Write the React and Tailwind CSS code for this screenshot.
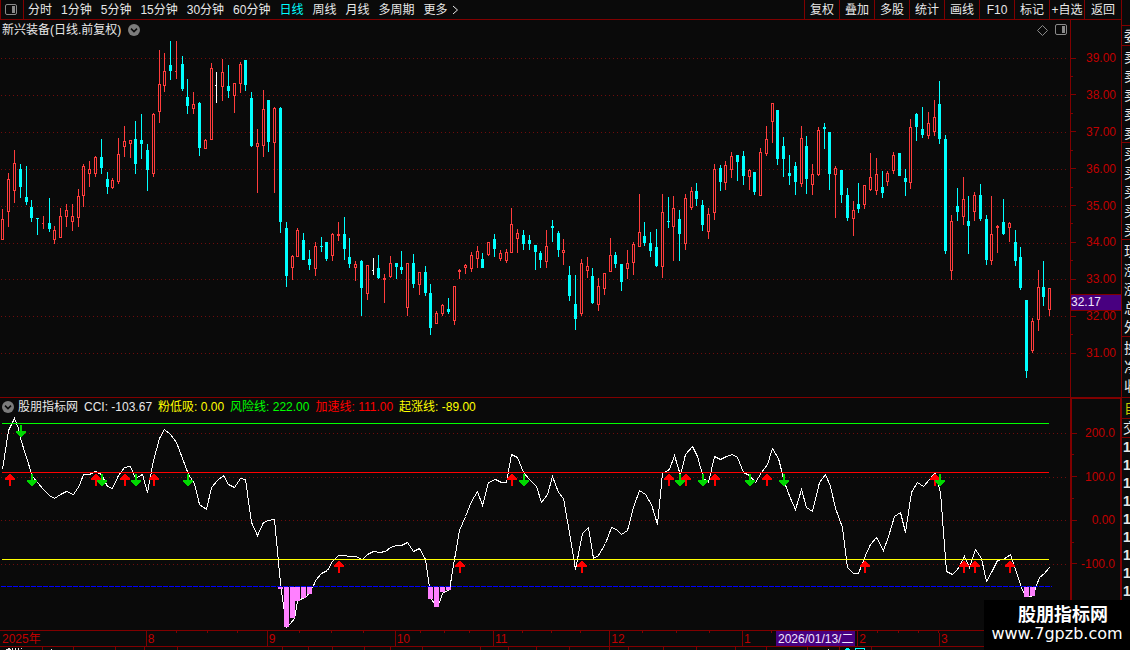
import React from "react";

const BG = "#0a0a0a";
const UP = "#ff3c3c";
const DOWN = "#00ffff";

// x, high, body top, body bottom, low, kind (R rising, C falling, W flat)
const candles = `
2 209 219 240 240 R|8 173 179 212 227 R|14 150 163 191 203 R|20 164 169 187 198 C|26 166 197 202 205 C
31 200 207 218 222 C|37 218 218 219 235 C|43 216 223 224 229 R|49 198 223 229 232 C|54 226 230 240 244 R
60 208 216 238 238 R|66 204 210 217 227 R|72 204 216 222 231 R|78 189 196 218 227 R|83 164 166 196 207 R
89 161 169 174 187 R|95 156 157 174 177 R|101 139 157 168 174 C|107 172 179 187 194 C|112 178 180 188 189 R
118 138 154 182 184 R|124 126 141 147 157 R|130 140 140 144 158 R|135 121 139 164 174 C|141 114 140 144 159 C
147 144 150 170 191 C|153 113 114 174 177 R|159 50 84 112 123 R|164 53 71 86 92 R|170 41 65 71 80 C
176 41 71 72 79 R|182 56 64 89 91 C|187 79 97 106 114 C|193 92 104 109 114 R|199 102 103 148 156 C
205 139 140 149 149 R|211 63 68 140 140 R|216 72 85 86 103 W|222 59 72 87 101 R|228 65 86 91 98 C
234 83 83 96 113 R|240 62 64 84 93 R|245 60 60 85 91 C|251 92 98 146 147 C|257 129 143 147 193 R
263 90 109 146 157 R|268 100 100 142 152 C|274 107 108 143 193 R|280 107 108 222 233 C|286 222 228 276 287 C
292 255 256 268 280 R|297 228 230 257 257 R|303 233 240 260 260 C|309 250 259 265 270 C|315 242 246 269 276 R
321 237 246 247 252 C|326 242 242 259 261 C|332 233 234 256 261 R|338 222 234 236 241 R|344 217 234 249 260 C
349 238 257 264 268 C|355 261 264 268 281 R|361 260 261 288 316 C|367 265 265 294 300 R|373 258 270 271 275 W
378 255 268 278 279 C|384 274 278 280 303 R|390 256 263 277 278 R|396 263 263 267 279 C|401 251 267 270 274 C
407 263 263 308 316 R|413 254 263 284 288 C|419 272 272 285 295 R|425 266 272 293 296 C|430 284 293 328 335 C
436 311 313 324 324 R|442 304 305 314 316 R|448 298 309 312 314 C|454 286 286 321 325 R|459 269 270 272 279 R
465 264 265 268 274 R|471 252 255 269 272 R|477 246 251 259 268 R|482 253 259 268 268 C|488 242 242 255 256 R
494 234 239 249 257 C|500 250 253 259 261 R|506 249 252 261 263 R|511 208 224 253 253 R|517 229 233 239 253 R
523 230 235 244 250 C|529 235 240 244 250 C|535 245 245 252 270 C|540 251 253 260 268 C|546 230 246 262 268 R
552 220 226 228 242 C|558 231 233 250 257 C|563 239 250 253 265 R|569 266 275 296 301 C|575 275 304 319 330 C
581 259 263 314 316 R|587 257 266 271 278 R|592 268 276 303 304 C|598 278 286 305 311 R|604 273 273 289 295 R
610 238 255 272 272 R|615 252 255 264 268 C|621 264 264 282 291 C|627 250 263 269 279 R|633 242 244 263 275 R
639 194 232 247 247 R|644 222 236 243 246 C|650 232 243 251 257 C|656 229 247 266 267 C|662 194 212 267 278 R
668 197 221 222 228 C|673 196 208 227 261 R|679 210 219 234 261 C|685 194 198 244 250 R|691 187 191 208 210 R
696 183 191 199 206 C|702 200 205 225 231 C|708 208 214 232 239 R|714 164 169 213 220 R|720 165 168 182 191 C
725 161 165 183 190 R|731 152 156 170 178 R|737 155 155 162 181 C|743 151 156 176 185 C|749 169 170 177 190 R
754 172 172 192 195 C|760 148 152 196 196 R|766 126 139 154 156 R|772 103 103 122 143 R|777 110 110 159 165 C
783 137 146 159 177 C|789 155 173 176 185 C|795 162 166 182 195 C|801 126 138 184 187 R|806 136 146 179 194 C
812 164 174 185 195 R|818 127 130 175 176 R|824 123 127 129 149 C|829 132 132 174 190 C|835 166 168 175 218 R
841 170 170 195 203 C|847 188 195 218 221 C|853 201 210 219 236 R|858 183 204 209 213 C|864 185 185 205 209 R
870 153 177 190 191 R|876 158 174 191 195 R|882 171 187 193 198 C|887 171 173 182 186 R|893 152 155 171 174 R
899 153 153 176 176 C|905 169 178 182 196 C|910 119 127 183 189 R|916 113 114 127 141 C|922 107 129 135 138 C
928 112 123 136 139 R|934 100 117 132 136 R|939 81 104 139 144 C|945 135 139 251 254 C|951 215 221 271 280 R
957 188 206 212 221 C|963 177 199 217 225 R|968 196 221 226 254 C|974 192 195 212 221 R|980 184 195 219 221 C
986 215 219 260 265 C|991 196 234 261 265 R|997 225 226 228 253 R|1003 199 222 234 235 C|1009 222 223 228 242 R
1015 230 242 261 266 C|1020 247 257 288 290 C|1026 300 300 371 378 C|1032 318 321 351 353 R|1038 270 287 320 331 R
1043 261 287 297 306 C|1049 288 288 310 316 R`
  .trim()
  .split(/[|\n]/)
  .map((row) => {
    const parts = row.trim().split(" ");
    return [...parts.slice(0, 5).map(Number), parts[5]];
  });

const cciPoints =
  "2,469 8,430 14,418 18,428 20,438 26,457 32,476 37,482 43,489 49,495 54,498 60,494 66,491 73,494 79,485 83,474 89,474 95,471 101,474 107,486 112,488 118,475 124,467 130,466 135,478 142,474 147,492 153,460 159,438 164,429 170,434 176,442 182,458 188,474 194,483 199,504 206,509 211,487 217,480 223,475 228,484 234,487 240,478 245,479 251,522 257,535 263,522 268,520 274,519 280,583 286,627 290,623 294,618 297,601 302,598 306,596 312,588 315,580 321,573 327,570 332,561 338,555 344,555 349,556 355,556 362,559 367,554 373,551 379,552 385,551 390,547 396,545 401,545 407,542 413,551 419,548 425,559 429,587 431,599 434,603 439,602 442,593 449,589 454,559 459,530 465,516 471,501 477,491 482,505 488,482 495,479 501,482 506,482 511,454 517,457 523,472 529,479 536,486 541,502 547,494 552,476 558,492 563,498 570,538 575,569 582,533 588,527 593,558 598,555 605,543 611,527 616,529 621,534 627,530 633,507 639,490 645,494 651,504 657,524 662,473 669,469 674,455 680,475 685,454 692,446 697,456 703,478 708,482 714,456 720,459 726,456 732,454 737,457 743,472 749,475 755,482 761,472 767,464 772,448 778,458 784,482 790,498 795,509 801,489 806,507 812,511 819,482 825,474 830,486 835,508 842,527 847,567 853,573 858,573 865,555 870,544 876,537 883,550 888,536 894,516 900,512 905,532 911,492 917,482 923,486 929,479 935,472 940,492 946,571 952,574 957,569 964,556 969,567 975,549 981,558 986,581 992,570 997,560 1003,559 1010,554 1015,569 1021,587 1025,596 1031,596 1035,588 1039,577 1044,573 1049,567";

// x, width, height, hanging from the blue threshold
const pinkBars = [
  [278, 5, 2], [284, 5, 40], [290, 5, 31], [295, 5, 14], [301, 5, 11], [307, 5, 7],
  [428, 5, 12], [434, 5, 20], [440, 5, 5], [446, 5, 3], [1024, 5, 10], [1030, 5, 9],
];

const upArrows = [
  [10, 474], [96, 474], [125, 474], [154, 474], [512, 474], [669, 474], [686, 474], [715, 474],
  [767, 474], [935, 474], [339, 561], [460, 561], [582, 561], [865, 561], [964, 561], [975, 561], [1010, 561],
];
const downArrows = [
  [21, 425], [32, 474], [102, 474], [136, 474], [188, 474], [524, 474], [680, 474], [703, 474],
  [750, 474], [784, 474], [940, 474],
];

const months = [
  ["2025年", 146], ["8", 121], ["9", 128], ["10", 98], ["11", 116], ["12", 133], ["1", 115], ["2", 81], ["3", 183],
];
const monthStarts = [146, 267, 395, 493, 609, 742, 857, 938];
const minorTicks = [176, 207, 237, 299, 331, 363, 420, 444, 469, 522, 551, 580, 642, 676, 709, 771, 877, 898, 918];
const tabEdges = [42, 73, 115, 144, 177, 282, 308, 332, 364, 390, 422, 480, 508, 536, 569, 609, 628, 663, 696, 735, 766, 807, 839, 871];

const periods = ["分时", "1分钟", "5分钟", "15分钟", "30分钟", "60分钟", "日线", "周线", "月线", "多周期"];
const tools = ["复权", "叠加", "多股", "统计", "画线", "F10", "标记", "+自选"];

function PanelIcon() {
  return (
    <svg width="13" height="12" viewBox="0 0 13 12" aria-hidden="true">
      <rect x="0.5" y="0.5" width="11" height="10" rx="1.5" fill="none" stroke="#8a8a8a" />
      <rect x="7" y="2" width="3" height="7" fill="#8a8a8a" />
    </svg>
  );
}

function CollapseIcon() {
  return (
    <svg width="12" height="12" viewBox="0 0 12 12" aria-hidden="true">
      <circle cx="6" cy="6" r="6" fill="#7c7c7c" />
      <path d="M3 4.6 L6 7.6 L9 4.6" fill="none" stroke="#0a0a0a" strokeWidth="1.5" />
    </svg>
  );
}

function Grid({ rows }) {
  return rows.map((y) => (
    <line key={y} x1="1" x2="1068" y1={y + 0.5} y2={y + 0.5} stroke="#700c0c" strokeDasharray="1 3" />
  ));
}

function Candle({ data }) {
  const [x, high, top, bottom, low, kind] = data;
  const color = kind === "R" ? UP : kind === "C" ? DOWN : "#ffffff";
  const flat = kind !== "C" && bottom - top === 1;
  return (
    <g fill={color}>
      <rect x={x} y={high} width="1" height={low - high} />
      <rect x={x - 1} y={top} width={flat ? 2 : 3} height={bottom - top} />
      {kind === "R" && bottom - top > 2 && (
        <rect x={x} y={top + 1} width="1" height={bottom - top - 2} fill={BG} />
      )}
    </g>
  );
}

function PriceChart() {
  return (
    <svg className="block h-auto w-full" viewBox="0 40 1070 357" shapeRendering="crispEdges" role="img" aria-label="日线">
      <Grid rows={[58, 95, 132, 169, 206, 243, 279, 316, 353]} />
      {candles.map((c) => (
        <Candle key={c[0]} data={c} />
      ))}
    </svg>
  );
}

function CciChart() {
  return (
    <svg className="block h-auto w-full" viewBox="0 416 1070 214" shapeRendering="crispEdges" role="img" aria-label="CCI">
      <Grid rows={[433, 477, 520, 564]} />
      <polyline points={cciPoints} transform="translate(0.5 0.5)" fill="none" stroke="#ffffff" />
      {pinkBars.map(([x, w, h]) => (
        <rect key={x} x={x} y="587" width={w} height={h} fill="#ff80ff" />
      ))}
      <rect x="2" y="423" width="1047" height="1" fill="#00ff00" />
      <rect x="2" y="472" width="1047" height="1" fill="#ff0000" />
      <rect x="2" y="559" width="1047" height="1" fill="#ffff00" />
      <line x1="1" x2="1052" y1="586.5" y2="586.5" stroke="#0000ff" strokeDasharray="5 1" />
      {upArrows.map(([x, y]) => (
        <path
          key={`${x}-${y}`}
          transform={`translate(${x} ${y})`}
          d="M-1 0h2v1h1v1h1v1h1v1h1v2h-4v6h-2v-6h-4v-2h1v-1h1v-1h1v-1h1z"
          fill="#ff0000"
        />
      ))}
      {downArrows.map(([x, y]) => (
        <path
          key={`${x}-${y}`}
          transform={`translate(${x} ${y})`}
          d="M-1 0h2v6h4v2h-1v1h-1v1h-1v1h-1v1h-2v-1h-1v-1h-1v-1h-1v-1h-1v-2h4z"
          fill="#00d800"
        />
      ))}
    </svg>
  );
}

function Scale({ labels }) {
  return labels.map((label, i) => (
    <React.Fragment key={label}>
      {i > 0 && (
        <div className="flex h-4 items-center">
          <span className="h-px w-[2px] bg-[#800000]" />
        </div>
      )}
      <div className="flex h-4 items-center justify-between pr-[5px]">
        <span className="h-px w-[5px] bg-[#800000]" />
        <span>{label}</span>
      </div>
    </React.Fragment>
  ));
}

function QuoteStrip() {
  const groups = [["卖", "卖", "卖", "卖", "卖"], ["买", "买", "买", "买", "买"], ["现", "涨", "涨", "总", "外"]];
  const cell = "flex h-[19px] items-center pl-[2px]";
  return (
    <aside className="w-[9px] shrink-0 overflow-hidden border-l border-[#800000] text-[14px] leading-[18px] whitespace-nowrap text-[#e8e8e8]">
      <div className="h-[26px] border-b border-[#800000]" />
      <div className="border-b border-[#800000]">
        <div className={cell}>委</div>
      </div>
      {groups.map((group, g) => (
        <div key={g} className="border-b border-[#800000] pt-px">
          {group.map((t, i) => (
            <div key={i} className={cell}>{t}</div>
          ))}
        </div>
      ))}
      <div className="border-b border-[#800000] pt-px pb-[2px]">
        {["换", "净", "收"].map((t) => (
          <div key={t} className={cell}>{t}</div>
        ))}
      </div>
      <div className="flex h-[21px] items-center border-b border-[#800000] pl-[2px] text-[#c8c800]">自</div>
      <div className="flex h-[19px] items-center border-b border-[#800000] pl-px">交</div>
      {Array.from({ length: 9 }, (_, i) => (
        <div key={i} className="flex h-[18px] items-center pl-px font-bold">1</div>
      ))}
    </aside>
  );
}

export default function App() {
  return (
    <div className="relative flex min-h-screen w-full overflow-hidden bg-[#0a0a0a] font-['Liberation_Sans','Noto_Sans_CJK_SC',sans-serif] text-[12px] leading-4 text-[#e8e8e8]">
      <div className="min-w-0 flex-1">
        <header className="flex h-5 items-stretch justify-between border-b border-l border-[#800000] whitespace-nowrap">
          <nav className="flex items-stretch">
            <button aria-label="侧栏" className="flex w-[23px] items-center border-r border-[#800000] pl-1">
              <PanelIcon />
            </button>
            <div className="flex items-center gap-[9px] pl-1">
              {periods.map((p) => (
                <button key={p} className={p === "日线" ? "text-[#00ffff]" : ""}>{p}</button>
              ))}
              <button className="flex items-center gap-1">
                更多
                <svg width="7" height="10" viewBox="0 0 7 10" aria-hidden="true">
                  <path d="M1 1 L5.5 5 L1 9" fill="none" stroke="#e8e8e8" />
                </svg>
              </button>
            </div>
          </nav>
          <div className="flex items-stretch">
            {tools.map((t) => (
              <button key={t} className="w-[35px] border-l border-[#800000]">{t}</button>
            ))}
            <button className="w-[37px] border-l border-[#800000]">返回</button>
          </div>
        </header>

        <section className="flex">
          <div className="min-w-0 flex-1">
            <div className="flex h-5 items-center justify-between pr-[2px] pl-[2px]">
              <h1 className="flex items-center gap-[7px]">
                新兴装备(日线.前复权)
                <button aria-label="展开" className="flex"><CollapseIcon /></button>
              </h1>
              <div className="flex items-center gap-[7px]">
                <button aria-label="标记点">
                  <svg className="block" width="11" height="11" viewBox="0 0 11 11" aria-hidden="true">
                    <path d="M5.5 0.5 L10.5 5.5 L5.5 10.5 L0.5 5.5 Z" fill="none" stroke="#8a8a8a" />
                  </svg>
                </button>
                <button aria-label="面板"><PanelIcon /></button>
              </div>
            </div>
            <PriceChart />
          </div>
          <div className="relative flex w-[51px] shrink-0 flex-col justify-between border-l border-[#800000] pt-[30px] pb-9 text-[#c00000]">
            <Scale labels={["39.00", "38.00", "37.00", "36.00", "35.00", "34.00", "33.00", "32.00", "31.00"]} />
            <div className="absolute inset-x-0 top-[274px] h-[17px] border-y border-[#800000] bg-[#480080] leading-[15px] text-[#f0e8ff]">32.17</div>
          </div>
        </section>

        <section className="flex">
          <div className="min-w-0 flex-1 border-t border-[#800000]">
            <div className="flex h-[18px] items-center gap-[6px] pl-[2px] whitespace-nowrap">
              <span className="flex items-center gap-1">
                <button aria-label="收起" className="flex"><CollapseIcon /></button>
                股朋指标网
              </span>
              <span>CCI: -103.67</span>
              <span className="text-[#ffff00]">粉低吸: 0.00</span>
              <span className="text-[#00ff00]">风险线: 222.00</span>
              <span className="text-[#ff0000]">加速线: 111.00</span>
              <span className="text-[#ffff00]">起涨线: -89.00</span>
            </div>
            <CciChart />
          </div>
          <div className="flex w-[51px] shrink-0 flex-col justify-between border-2 border-b-0 border-r-1 border-[#800000] pt-[26px] pb-[58px] text-[#c00000]">
            <Scale labels={["200.0", "100.0", "0.00", "-100.0"]} />
          </div>
        </section>

        <footer className="relative border-y border-[#800000]">
          <svg className="block h-[2px] w-full" viewBox="0 0 1121 2" preserveAspectRatio="none" shapeRendering="crispEdges" aria-hidden="true">
            {[...monthStarts, ...minorTicks].map((x) => (
              <rect key={x} x={x} y="0" width="1" height="2" fill="#800000" />
            ))}
          </svg>
          <div className="flex h-[13px] leading-[12px] text-[#c00000]">
            {months.map(([name, span], i) => (
              <div
                key={name}
                className={i === 0 ? "min-w-0 basis-0 pl-[2px]" : "min-w-0 basis-0 border-l border-[#800000] pl-px"}
                style={{ flexGrow: span }}
              >
                {name}
              </div>
            ))}
          </div>
          <div className="absolute inset-y-0 left-[776px] flex items-center bg-[#480080] px-[2px] whitespace-nowrap text-[#f0e8ff]">2026/01/13/二</div>
        </footer>
        <svg className="block h-[3px] w-full" viewBox="0 0 1121 3" preserveAspectRatio="none" shapeRendering="crispEdges" aria-hidden="true">
          {tabEdges.map((x) => (
            <rect key={x} x={x} y="0" width="1" height="3" fill="#800000" />
          ))}
          <path d="M8 1h2v1h-2zM12 1h1v2h-1zM15 1h1v2h-1zM18 1h1v2h-1zM21 1h1v1h-1zM6 2h5v1h-5zM51 2h1v1h-1zM828 2h1v1h-1z" fill="#e8e8e8" />
          <path d="M846 1h3v1h-3zM845 2h5v1h-5zM855 1h10v1h-10zM855 2h1v1h-1zM864 2h1v1h-1z" fill="#00ffff" />
        </svg>
      </div>

      <QuoteStrip />

      <a href="#" className="absolute right-0 bottom-0 flex h-[50px] w-[146px] flex-col items-center bg-black pt-1 text-white">
        <span className="pl-3 text-[18px] leading-[22px] font-bold">股朋指标网</span>
        <span className="font-['DejaVu_Sans',sans-serif] text-[16px] leading-4">www.7gpzb.com</span>
      </a>
    </div>
  );
}
